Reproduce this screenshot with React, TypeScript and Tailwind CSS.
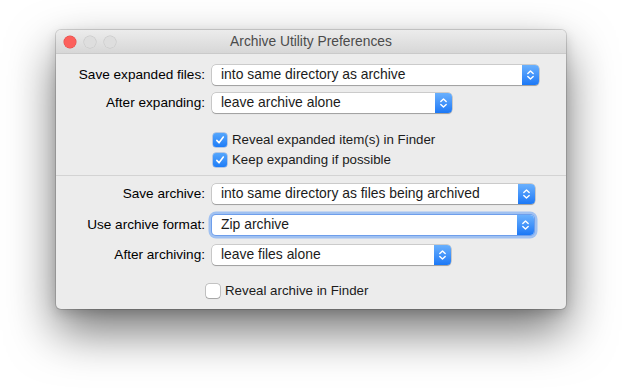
import React from "react";

function Chevrons() {
  return (
    <svg width="9" height="14" viewBox="0 0 9 14" fill="none">
      <path d="M1.8 5.6 L4.5 2.9 L7.2 5.6" stroke="white" strokeWidth="1.4" strokeLinecap="round" strokeLinejoin="round" />
      <path d="M1.8 8.4 L4.5 11.1 L7.2 8.4" stroke="white" strokeWidth="1.4" strokeLinecap="round" strokeLinejoin="round" />
    </svg>
  );
}

function Popup({ text, className, focused }: { text: string; className: string; focused?: boolean }) {
  return (
    <div
      className={`flex h-[20px] items-stretch rounded-[4px] bg-white ${
        focused
          ? "shadow-[0_0_0_1px_rgba(70,130,230,0.55),0_0_0_3.5px_rgba(110,165,245,0.6)]"
          : "shadow-[0_0_0_0.5px_rgba(0,0,0,0.28),0_1px_1px_rgba(0,0,0,0.22)]"
      } ${className}`}
    >
      <div className="flex flex-1 items-center whitespace-nowrap pl-[9px] text-[13.9px] leading-none text-[#1b1b1b]">{text}</div>
      <div className="flex w-[17px] items-center justify-center rounded-r-[4px] bg-gradient-to-b from-[#69b0fd] to-[#1a78f6]">
        <Chevrons />
      </div>
    </div>
  );
}

function Row({ label, children, className }: { label: string; children: React.ReactNode; className: string }) {
  return (
    <div className={`flex h-[21px] items-start ${className}`}>
      <div className="flex h-[20px] w-[149px] items-center justify-end whitespace-nowrap text-[13.6px] leading-none text-black">{label}</div>
      <div className="ml-[7px]">{children}</div>
    </div>
  );
}

function Check({ checked }: { checked: boolean }) {
  if (checked) {
    return (
      <div className="flex h-[14px] w-[14px] items-center justify-center rounded-[3px] bg-gradient-to-b from-[#55a6fc] to-[#1c7cf7] shadow-[0_0_0_0.5px_rgba(20,90,200,0.5)]">
        <svg width="10" height="10" viewBox="0 0 10 10" fill="none">
          <path d="M1.8 5.4 L4 7.8 L8.3 2" stroke="white" strokeWidth="1.6" strokeLinecap="round" strokeLinejoin="round" />
        </svg>
      </div>
    );
  }
  return <div className="h-[14px] w-[14px] rounded-[3px] bg-white shadow-[0_0_0_0.5px_rgba(0,0,0,0.35),0_1px_1px_rgba(0,0,0,0.15)]" />;
}

function CheckRow({ label, checked, className }: { label: string; checked: boolean; className: string }) {
  return (
    <div className={`flex h-[14px] items-center gap-[5px] ${className}`}>
      <Check checked={checked} />
      <span className="whitespace-nowrap text-[13.3px] leading-none text-[#1b1b1b]">{label}</span>
    </div>
  );
}

export default function App() {
  return (
    <div
      className="h-[389px] w-[622px] overflow-hidden bg-white pl-[56px] pt-[30px]"
      style={{ fontFamily: '"Liberation Sans", Arial, sans-serif' }}
    >
      <div className="flex h-[279px] w-[510px] flex-col overflow-hidden rounded-[5px] bg-[#ececec] shadow-[0_0_0_1px_rgba(0,0,0,0.14),0_22px_48px_rgba(0,0,0,0.55),0_4px_12px_rgba(0,0,0,0.15)]">
        <div className="relative flex h-[24px] shrink-0 items-center border-b border-[#cacaca] bg-gradient-to-b from-[#ececec] to-[#d7d7d7]">
          <div className="flex gap-[8px] pl-[8px]">
            <div className="h-[12px] w-[12px] rounded-full bg-[#fc605c] shadow-[0_0_0_0.5px_#de4a46]" />
            <div className="h-[12px] w-[12px] rounded-full bg-[#dedede] shadow-[0_0_0_0.5px_#c4c4c4]" />
            <div className="h-[12px] w-[12px] rounded-full bg-[#dedede] shadow-[0_0_0_0.5px_#c4c4c4]" />
          </div>
          <div className="pointer-events-none absolute inset-0 flex items-center justify-center text-[13.8px] leading-none text-[#4b4b4b]">
            Archive Utility Preferences
          </div>
        </div>

        <Row label="Save expanded files:" className="mt-[11px]">
          <Popup text="into same directory as archive" className="w-[327px]" />
        </Row>
        <Row label="After expanding:" className="mt-[7px]">
          <Popup text="leave archive alone" className="w-[240px]" />
        </Row>
        <CheckRow label="Reveal expanded item(s) in Finder" checked className="ml-[157px] mt-[19px]" />
        <CheckRow label="Keep expanding if possible" checked className="ml-[157px] mt-[6px]" />

        <div className="mt-[8px] h-px shrink-0 bg-[#d3d3d3]" />

        <Row label="Save archive:" className="mt-[8px]">
          <Popup text="into same directory as files being archived" className="w-[323px]" />
        </Row>
        <Row label="Use archive format:" className="mt-[10px]">
          <Popup text="Zip archive" className="w-[322px]" focused />
        </Row>
        <Row label="After archiving:" className="mt-[9px]">
          <Popup text="leave files alone" className="w-[239px]" />
        </Row>
        <CheckRow label="Reveal archive in Finder" checked={false} className="ml-[150px] mt-[18px]" />
      </div>
    </div>
  );
}
